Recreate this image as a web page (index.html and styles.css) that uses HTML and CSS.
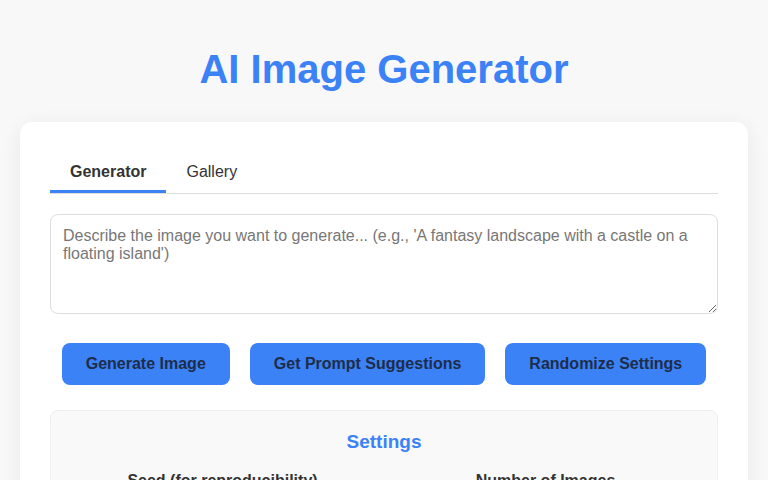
FILE: index.html
```html
<!DOCTYPE html>
<html lang="en">
<head>
<meta charset="utf-8">
<title>AI Image Generator</title>
<link rel="stylesheet" href="styles.css">
</head>
<body>
<div class="page">
  <h1 class="title">AI Image Generator</h1>
  <div class="card">
    <div class="tabs">
      <div class="tab active">Generator</div>
      <div class="tab">Gallery</div>
    </div>
    <textarea class="prompt" placeholder="Describe the image you want to generate... (e.g., 'A fantasy landscape with a castle on a floating island')"></textarea>
    <div class="actions">
      <button class="btn">Generate Image</button>
      <button class="btn">Get Prompt Suggestions</button>
      <button class="btn">Randomize Settings</button>
    </div>
    <div class="settings">
      <h3 class="settings-title">Settings</h3>
      <div class="settings-grid">
        <div class="field"><label class="field-label">Seed (for reproducibility)</label></div>
        <div class="field"><label class="field-label">Number of Images</label></div>
      </div>
    </div>
  </div>
</div>
</body>
</html>
```

FILE: styles.css
```css
* { box-sizing: border-box; }
html, body { margin: 0; padding: 0; }
body {
  background: #f8f8f9;
  font-family: "Liberation Sans", Arial, sans-serif;
  color: #333;
}
.page {
  padding: 20px 20px 0;
}
.title {
  margin: 26px 0 30px;
  text-align: center;
  color: #3b82f6;
  font-size: 40px;
  line-height: 46px;
  font-weight: 700;
}
.card {
  background: #fff;
  border-radius: 12px;
  box-shadow: 0 4px 20px rgba(0,0,0,0.07);
  padding: 30px 30px 40px;
}
.tabs {
  display: flex;
  border-bottom: 1px solid #ddd;
}
.tab {
  padding: 10px 20px 9px;
  font-size: 16px;
  line-height: 19px;
  color: #333;
  border-bottom: 3px solid transparent;
  margin-bottom: 0;
}
.tab.active {
  font-weight: 700;
  border-bottom-color: #3b82f6;
}
.prompt {
  display: block;
  width: 100%;
  height: 100px;
  margin-top: 20px;
  padding: 12px;
  border: 1px solid #ddd;
  border-radius: 8px;
  font-family: "Liberation Sans", Arial, sans-serif;
  font-size: 16px;
  line-height: 18px;
  color: #333;
  resize: vertical;
}
.prompt::placeholder { color: #777; }
.actions {
  display: flex;
  justify-content: center;
  gap: 20px;
  margin-top: 29px;
}
.btn {
  background: #3b82f6;
  color: #1e2d4a;
  border: none;
  border-radius: 8px;
  padding: 12px 24px;
  font-family: "Liberation Sans", Arial, sans-serif;
  font-size: 16px;
  line-height: 18px;
  font-weight: 700;
}
.settings {
  margin-top: 25px;
  background: #f9f9f9;
  border: 1px solid #eee;
  border-radius: 8px;
  padding: 19px 20px 20px;
}
.settings-title {
  margin: 0;
  text-align: center;
  color: #3b82f6;
  font-size: 19px;
  line-height: 23px;
  font-weight: 700;
}
.settings-grid {
  display: grid;
  grid-template-columns: 1fr 1fr;
  gap: 20px;
  margin-top: 19px;
}
.field { text-align: center; }
.field-label {
  font-size: 16px;
  line-height: 18px;
  font-weight: 700;
  color: #333;
}
```
